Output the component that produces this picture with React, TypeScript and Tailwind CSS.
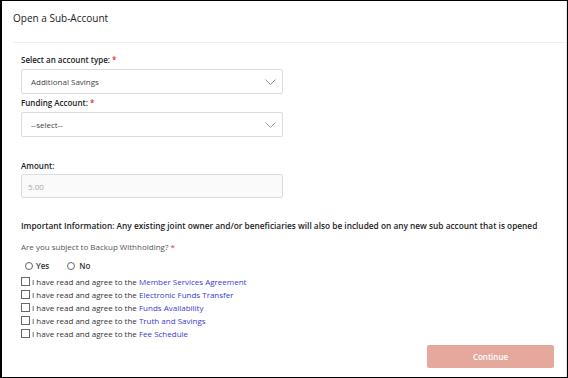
import React from "react";

const font = { fontFamily: '"Open Sans", "Liberation Sans", sans-serif' };

const Chevron = () => (
  <svg width="11" height="6" viewBox="0 0 11 6" fill="none" className="text-[#8a8a8a]">
    <path d="M0.5 0.5l5 5 5-5" stroke="currentColor" strokeWidth="0.9" />
  </svg>
);

const Select = ({ value }: { value: string }) => (
  <div className="flex h-[25px] w-[262px] items-center justify-between rounded-[2px] border border-[#dcdcdc] bg-white pl-[9px] pr-[6px] text-[8px] text-[#444]">
    <span>{value}</span>
    <Chevron />
  </div>
);

const Required = () => <span className="text-[#e03030]"> *</span>;

const agreements = [
  "Member Services Agreement",
  "Electronic Funds Transfer",
  "Funds Availability",
  "Truth and Savings",
  "Fee Schedule",
];

export default function App() {
  return (
    <div
      style={font}
      className="flex h-[378px] w-[568px] flex-col border border-l-2 border-black bg-white text-[#333]"
    >
      <div className="flex flex-1 flex-col border-r border-[#e6e6e6]">
        <div className="h-[41px] px-[11px] pt-[10px] text-[10px] leading-[14px] text-[#222]">Open a Sub-Account</div>
        <div className="ml-[11px] h-px bg-[#efefef]" />

        <div className="flex flex-col pl-[19px] pt-[11px] text-[8px] leading-[11px]">
          <div className="font-semibold text-[#222]">
            Select an account type:<Required />
          </div>
          <div className="mt-[4px]">
            <Select value="Additional Savings" />
          </div>
          <div className="mt-[3px] font-semibold text-[#222]">
            Funding Account:<Required />
          </div>
          <div className="mt-[4px]">
            <Select value="--select--" />
          </div>

          <div className="mt-[23px] font-semibold text-[#222]">Amount:</div>
          <div className="mt-[3px] flex h-[24px] w-[262px] items-center rounded-[2px] border border-[#dcdcdc] bg-[#fafafa] pl-[6px] text-[#aaa]">
            5.00
          </div>

          <div className="mt-[22px] text-[8.3px] font-semibold text-[#222]">
            Important Information: Any existing joint owner and/or beneficiaries will also be included on any new sub account that is opened
          </div>
          <div className="mt-[10px] text-[#555]">
            Are you subject to Backup Withholding?<Required />
          </div>

          <div className="mt-[8px] flex items-center pl-[4px] font-semibold text-[#333]">
            <span className="inline-block h-[8px] w-[8px] rounded-full border border-[#666]" />
            <span className="ml-[3px]">Yes</span>
            <span className="ml-[18px] inline-block h-[8px] w-[8px] rounded-full border border-[#666]" />
            <span className="ml-[4px]">No</span>
          </div>

          <div className="mt-[4px] flex flex-col">
            {agreements.map((a) => (
              <div key={a} className="flex h-[13px] items-center text-[#333]">
                <span className="inline-block h-[9px] w-[9px] border border-[#666]" />
                <span className="ml-[2px]">
                  I have read and agree to the <span className="text-[#3a3ad0]">{a}</span>
                </span>
              </div>
            ))}
          </div>

          <div className="mt-[5px] flex justify-end pr-[12px]">
            <button className="h-[23px] w-[127px] rounded-[2px] bg-[#e4a99c] text-[8px] font-semibold text-white">
              Continue
            </button>
          </div>
        </div>
      </div>
    </div>
  );
}
